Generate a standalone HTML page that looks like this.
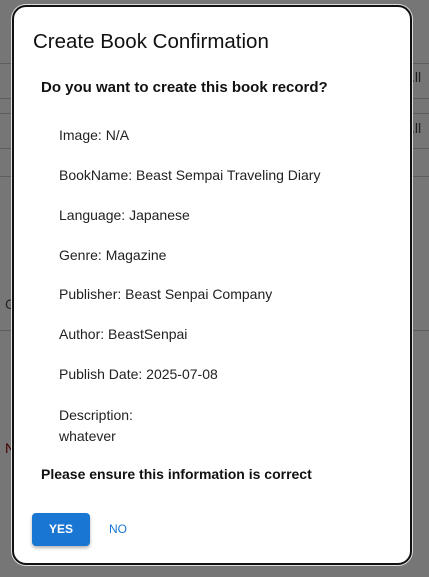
<!DOCTYPE html>
<html><head><style>
html,body{margin:0;padding:0;width:429px;height:577px;overflow:hidden;background:#767676;font-family:"Liberation Sans",sans-serif;}
.line{position:absolute;left:0;width:429px;height:1px;background:#5e5e5e;}
.bgt{position:absolute;font-size:14px;color:#222;}
.dlg{position:absolute;left:12px;top:5px;width:396px;height:556px;background:#fff;border:2px solid #111;border-radius:14px;box-shadow:0 0 0 1px #ddd;}
.title{position:absolute;left:19px;top:23px;font-size:20.5px;color:#111;}
.q{position:absolute;left:27px;top:72px;font-size:15px;font-weight:bold;color:#111;}
.item{position:absolute;left:45px;font-size:14px;color:#222;}
.btn{position:absolute;width:58px;height:33px;background:#1976d2;color:#fff;border-radius:4px;font-size:12px;font-weight:bold;text-align:center;line-height:33px;box-shadow:0 2px 3px rgba(0,0,0,.3);}
.no{position:absolute;line-height:33px;font-size:12px;color:#1976d2;}
</style></head><body>
<div class="line" style="top:63px"></div>
<div class="line" style="top:98px"></div>
<div class="line" style="top:113px"></div>
<div class="line" style="top:148px"></div>
<div class="line" style="top:176px"></div>
<div class="line" style="top:330px"></div>
<div class="bgt" style="left:411px;top:69px">.ll</div>
<div class="bgt" style="left:411px;top:120px">.ll</div>
<div class="bgt" style="left:5px;top:296px">G</div>
<div class="bgt" style="left:5px;top:440px;color:#400">N</div>
<div class="dlg">
<div class="title">Create Book Confirmation</div>
<div class="q">Do you want to create this book record?</div>
<div class="item" style="top:120px">Image: N/A</div>
<div class="item" style="top:160px">BookName: Beast Sempai Traveling Diary</div>
<div class="item" style="top:200px">Language: Japanese</div>
<div class="item" style="top:240px">Genre: Magazine</div>
<div class="item" style="top:279px">Publisher: Beast Senpai Company</div>
<div class="item" style="top:319px">Author: BeastSenpai</div>
<div class="item" style="top:359px">Publish Date: 2025-07-08</div>
<div class="item" style="top:398px;line-height:21px">Description:<br>whatever</div>
<div class="q" style="top:459px;font-size:14px">Please ensure this information is correct</div>
</div>
<div class="btn" style="left:32px;top:513px">YES</div>
<div class="no" style="left:109px;top:513px">NO</div>
</body></html>
